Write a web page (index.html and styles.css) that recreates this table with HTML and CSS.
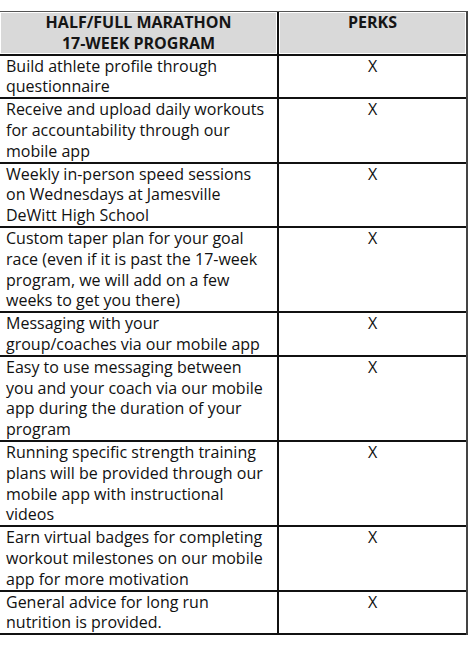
FILE: index.html
```
<!DOCTYPE html>
<html lang="en">
<head>
<meta charset="utf-8">
<title>Half/Full Marathon 17-Week Program</title>
<link rel="stylesheet" href="styles.css">
</head>
<body>
<main class="sheet">
  <div class="table">
    <div class="row row-head">
      <div class="cell desc head">HALF/FULL MARATHON<br>17-WEEK PROGRAM</div>
      <div class="cell perk head">PERKS</div>
    </div>
    <div class="row">
      <div class="cell desc">Build athlete profile through<br>questionnaire</div>
      <div class="cell perk">X</div>
    </div>
    <div class="row">
      <div class="cell desc">Receive and upload daily workouts<br>for accountability through our<br>mobile app</div>
      <div class="cell perk">X</div>
    </div>
    <div class="row">
      <div class="cell desc">Weekly in-person speed sessions<br>on Wednesdays at Jamesville<br>DeWitt High School</div>
      <div class="cell perk">X</div>
    </div>
    <div class="row">
      <div class="cell desc">Custom taper plan for your goal<br>race (even if it is past the 17-week<br>program, we will add on a few<br>weeks to get you there)</div>
      <div class="cell perk">X</div>
    </div>
    <div class="row">
      <div class="cell desc">Messaging with your<br>group/coaches via our mobile app</div>
      <div class="cell perk">X</div>
    </div>
    <div class="row">
      <div class="cell desc">Easy to use messaging between<br>you and your coach via our mobile<br>app during the duration of your<br>program</div>
      <div class="cell perk">X</div>
    </div>
    <div class="row">
      <div class="cell desc">Running specific strength training<br>plans will be provided through our<br>mobile app with instructional<br>videos</div>
      <div class="cell perk">X</div>
    </div>
    <div class="row">
      <div class="cell desc">Earn virtual badges for completing<br>workout milestones on our mobile<br>app for more motivation</div>
      <div class="cell perk">X</div>
    </div>
    <div class="row">
      <div class="cell desc">General advice for long run<br>nutrition is provided.</div>
      <div class="cell perk">X</div>
    </div>
  </div>
</main>
</body>
</html>
```
FILE: styles.css
```
html, body {
  margin: 0;
  padding: 0;
  background: #ffffff;
}

body {
  font-family: "Open Sans", "Noto Sans", sans-serif;
  font-size: 16px;
  line-height: 20.8px;
  color: #111111;
}

.sheet {
  width: 469px;
  padding-top: 11px;
}

.table {
  width: 466px;
  border-top: 1px solid #555555;
  border-right: 2px solid #444444;
}

.row {
  display: grid;
  grid-template-columns: 277px 1fr;
  border-bottom: 2px solid #111111;
}

.cell {
  padding: 0;
}

.desc {
  padding-left: 6px;
  white-space: nowrap;
  overflow: hidden;
}

.perk {
  border-left: 2px solid #111111;
  text-align: center;
}

.head {
  background: #d9d9d9;
  box-shadow: inset 0 0 0 1px #ffffff;
  font-weight: 700;
  text-align: center;
  color: #151515;
}

.desc.head {
  padding-left: 0;
}
```
